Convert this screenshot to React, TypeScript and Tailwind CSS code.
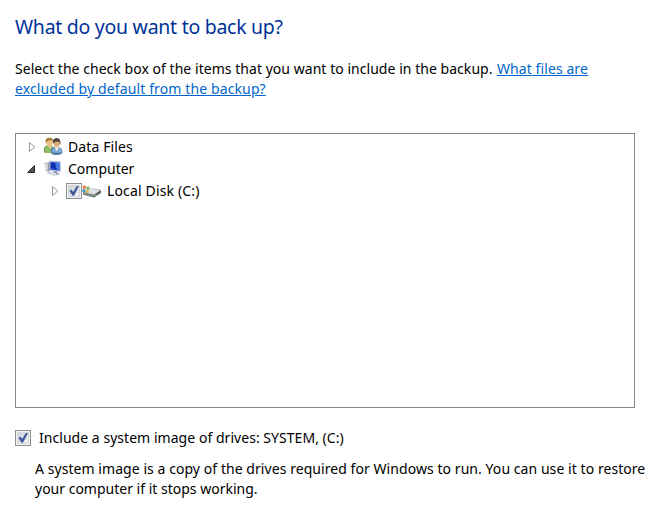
function Check() {
  return (
    <svg className="block h-4 w-4 shrink-0" viewBox="0 0 16 16">
      <defs>
        <linearGradient id="box" x1="0" y1="0" x2="1" y2="1">
          <stop offset="0" stopColor="#cbcfd5" />
          <stop offset="1" stopColor="#f6f6f6" />
        </linearGradient>
      </defs>
      <rect x=".5" y=".5" width="15" height="15" fill="#f4f4f4" stroke="#8e8f8f" />
      <rect x="2.5" y="2.5" width="11" height="11" fill="url(#box)" stroke="#d3d6da" />
      <path d="M3.4 8 5.4 6.6 7.1 9 10.8 2.9 12.9 3.2 8 12.8 6.6 12.8Z" fill="#405a9c" />
    </svg>
  );
}

function Closed() {
  return (
    <svg className="block h-3 w-2 shrink-0" viewBox="0 0 8 12">
      <path d="M1.5 1.5v9L6.7 6Z" fill="#fff" stroke="#989898" />
    </svg>
  );
}

function Opened() {
  return (
    <svg className="block h-[9px] w-[9px] shrink-0" viewBox="0 0 9 9">
      <path d="M7.5 .5v7H.7Z" fill="#555" stroke="#262626" />
    </svg>
  );
}

function People() {
  return (
    <svg className="block h-5 w-5 shrink-0" viewBox="0 0 20 20">
      <path d="M1 14Q.5 9 4 8.5L9 9l3 3v4H3Q1 16 1 14Z" fill="#6c9b4c" />
      <path d="M2 13q0-3 3-4l2 3 2-3 2 2v5H3Z" fill="#91bd67" />
      <path d="M5 8l2 4 2-4Z" fill="#eee3c9" />
      <ellipse cx="6.5" cy="5.5" rx="3" ry="4" fill="#edc183" />
      <path d="M2.8 6.5Q1.5.9 6 .7q4.5-.3 4 4L8 3 4.5 4Z" fill="#a17b35" />
      <path d="M8 16q-1-5 3-6l5 .2q4 1 3.3 5.8Q18 18 13.5 18T8 16Z" fill="#557fa8" />
      <path d="M9 15.5q0-4 3-5l2 2 2-2q3 1 2.5 5Z" fill="#7fadd6" />
      <path d="m11.5 10 2.2 4 2.4-4Z" fill="#f4f6f8" />
      <ellipse cx="13.7" cy="6.8" rx="3" ry="3.9" fill="#d9a878" />
      <path d="M10 7q-1-5.5 3.5-6Q18.3 1 17.4 8L16 4.5l-4 .2Z" fill="#4c443f" />
      <path d="M12.2 9q1.5 1.3 3 0" fill="none" stroke="#fff2dd" strokeWidth=".8" />
    </svg>
  );
}

function Computer() {
  return (
    <svg className="block h-[18px] w-[18px] shrink-0" viewBox="0 0 18 18">
      <path d="m1 3.2 4.5-.9v9L2 10.8Z" fill="#c5c9d2" stroke="#a1a7b5" strokeWidth=".6" />
      <path d="M2.2 4.5v5" stroke="#f0f2f5" strokeWidth="1.2" />
      <path d="M4.5 3.2v7.4" stroke="#8a93ab" />
      <path d="m5.5 1 10.8.8.2 9.5-11-1Z" fill="#cdd6ee" stroke="#98a4c5" strokeWidth=".6" />
      <path d="m6.4 1.9 9 .8.2 7.7-9.2-1Z" fill="#1231b0" />
      <path d="m11.5 2.3 3.9.4.2 7.7-2-.2Q11 7 11.5 2.3Z" fill="#4778e3" />
      <path d="M6.4 8.2q3-1 4.7 1.7l-4.7-.5Z" fill="#315bd0" />
      <path d="m9.5 10.8 4 .4v1.5l2 1-1 .9-6-.7 1.2-1.4Z" fill="#929cae" />
      <path d="m4 11.8 7.5 1.5 1.5 1.8-2.3.2-7.2-2Z" fill="#e5e9f0" stroke="#adb5c4" strokeWidth=".6" />
      <path d="m13.5 13.8 2.3.5-.2 1-2-.3Z" fill="#b4bdcb" />
    </svg>
  );
}

function Drive() {
  return (
    <svg className="block h-[17px] w-5 shrink-0" viewBox="0 0 20 17">
      <path d="m1 9 7-3 11 1v3l-7 4.5L1 11.8Z" fill="#626a6d" />
      <path d="m1 9 7-3.5L19 7l-7 4.7Z" fill="#e0e4e4" stroke="#a4adad" strokeWidth=".6" />
      <path d="m1.3 9.5 10.6 2.8v1.8L1.3 11.6Z" fill="#87918f" />
      <path d="m12 12 6.7-4.4v2.2L12 14Z" fill="#566263" />
      <path d="m12.8 12.8 1.8-1" stroke="#7ecb54" strokeWidth="1.2" />
      <path d="M1 3q1.5-1 3 .1L3.6 6Q2.2 5 .7 6Z" fill="#e67546" />
      <path d="M4.6 3.4Q6 4 7.4 3.3L7 6.2q-1.2.8-2.8 0Z" fill="#78b052" />
      <path d="M.6 6.6q1.5-1 2.9 0L3 9.2Q1.7 8.4.3 9Z" fill="#408fbd" />
      <path d="M4.1 6.9q1.3.7 2.8 0l-.4 2.5q-1.3.7-2.8 0Z" fill="#d3b451" />
    </svg>
  );
}

export default function App() {
  return (
    <main className="h-[527px] w-[662px] overflow-hidden bg-white pl-[15px] pt-[13px] font-['Noto_Sans',sans-serif] text-[14px] leading-5 text-black">
      <h1 className="h-7 whitespace-nowrap text-[19.5px] leading-7 tracking-[-0.28px] text-[#003399]"><span>What do you want to back up?</span></h1>
      <div className="mt-[18px] whitespace-nowrap">
        <div className="flex h-5">
          <span className="w-[482px] tracking-[0.04px]">Select the check box of the items that you want to include in the backup.</span>
          <a className="tracking-[0.08px] text-[#0066cc] underline underline-offset-1">What files are</a>
        </div>
        <div className="h-5"><a className="tracking-[0.12px] text-[#0066cc] underline underline-offset-1">excluded by default from the backup?</a></div>
      </div>
      <section className="mt-[34px] h-[275px] w-[620px] border border-[#828790] pt-[2px]">
        <div className="flex h-[22px] items-center pl-3">
          <Closed /><div className="ml-[7px]"><People /></div><span className="ml-[5px] tracking-[0.12px]">Data Files</span>
        </div>
        <div className="flex h-[22px] items-center pl-[11px]">
          <Opened /><div className="ml-[8px]"><Computer /></div><span className="ml-[6px]">Computer</span>
        </div>
        <div className="flex h-[22px] items-center pl-[35px]">
          <Closed /><div className="ml-[7px]"><Check /></div><Drive /><span className="ml-[5px] tracking-[0.15px]">Local Disk (C:)</span>
        </div>
      </section>
      <div className="mt-5 flex h-5 items-center whitespace-nowrap">
        <Check /><span className="ml-2 tracking-[0.04px]">Include a system image of drives: SYSTEM, (C:)</span>
      </div>
      <div className="ml-5 mt-[11px] whitespace-nowrap">
        <div className="h-5"><span className="tracking-[0.06px]">A system image is a copy of the drives required for Windows to run. You can use it to restore</span></div>
        <div className="h-5"><span>your computer if it stops working.</span></div>
      </div>
    </main>
  );
}
